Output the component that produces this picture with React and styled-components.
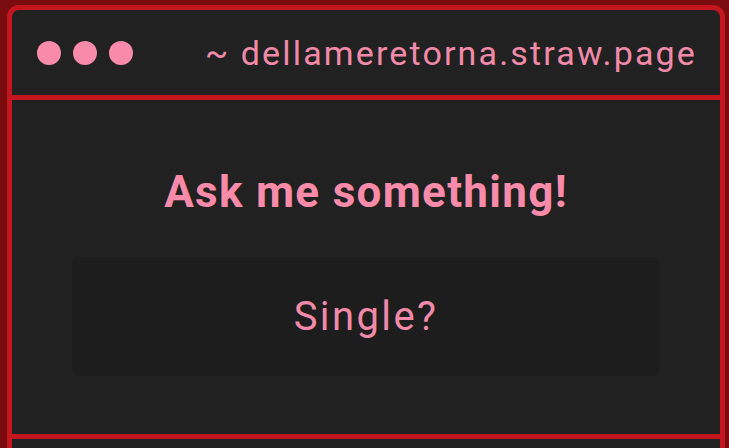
import React from 'react'
import styled, { createGlobalStyle } from 'styled-components'

const GlobalStyle = createGlobalStyle`
  html, body {
    margin: 0;
    padding: 0;
    height: 100%;
    background: #7a0b0e;
    overflow: hidden;
  }
  body {
    font-family: Roboto, "Liberation Sans", sans-serif;
  }
`

const Page = styled.div`
  height: 448px;
  padding: 5px 4px 0 7px;
  box-sizing: border-box;
  overflow: hidden;
`

const Window = styled.div`
  height: 460px;
  border: 5px solid #c5151e;
  border-radius: 12px;
  background: #212121;
  overflow: hidden;
`

const TitleBar = styled.div`
  height: 85px;
  border-bottom: 5px solid #c5151e;
  display: flex;
  align-items: center;
  justify-content: space-between;
  padding: 0 25px;
`

const Dots = styled.div`
  display: flex;
  gap: 12px;
`

const Dot = styled.span`
  width: 24px;
  height: 24px;
  border-radius: 50%;
  background: #f78ba9;
`

const Url = styled.span`
  color: #f08aa8;
  font-size: 34px;
  letter-spacing: 2.15px;
  line-height: 1;
  margin-right: -2px;
`

const Body = styled.div`
  height: 339px;
  box-sizing: border-box;
  border-bottom: 5px solid #c5151e;
  display: flex;
  flex-direction: column;
  align-items: center;
  padding: 66px 60px 0;
`

const Heading = styled.h1`
  margin: 0;
  color: #f78ba9;
  font-size: 44px;
  font-weight: 700;
  letter-spacing: 1.3px;
  line-height: 53px;
`

const Card = styled.div`
  margin-top: 38px;
  align-self: stretch;
  height: 119px;
  border-radius: 8px;
  background: #1e1d1e;
  display: flex;
  align-items: center;
  justify-content: center;
  color: #f08aa8;
  font-size: 40px;
  letter-spacing: 2.4px;
`

export default function App() {
  return (
    <>
      <GlobalStyle />
      <Page>
        <Window>
          <TitleBar>
            <Dots>
              <Dot />
              <Dot />
              <Dot />
            </Dots>
            <Url>~ dellameretorna.straw.page</Url>
          </TitleBar>
          <Body>
            <Heading>Ask me something!</Heading>
            <Card>Single?</Card>
          </Body>
        </Window>
      </Page>
    </>
  )
}
